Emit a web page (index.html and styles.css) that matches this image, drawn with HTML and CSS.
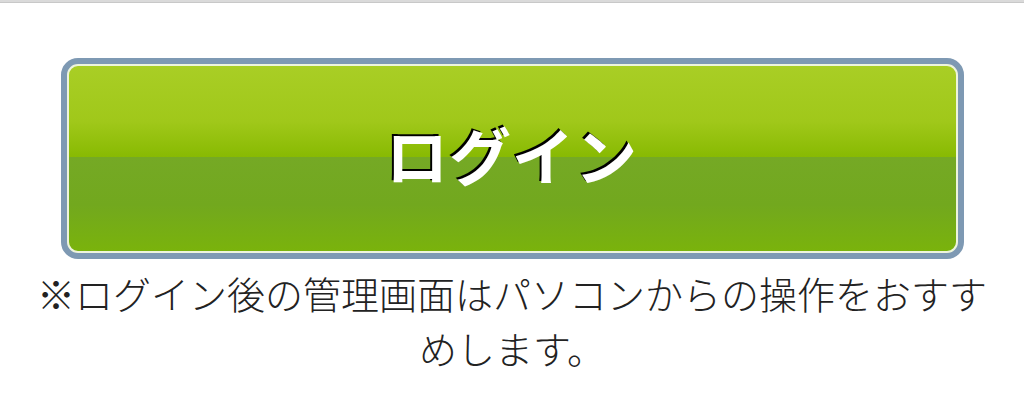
FILE: index.html
```html
<!DOCTYPE html>
<html lang="ja">
<head>
<meta charset="utf-8">
<link rel="stylesheet" href="styles.css">
</head>
<body>
<div class="topbar"></div>
<main class="page">
  <a class="login-btn" href="#"><span class="login-inner"><span class="login-label">ログイン</span></span></a>
  <p class="note">※ログイン後の管理画面はパソコンからの操作をおすすめします。</p>
</main>
</body>
</html>
```
FILE: styles.css
```css
html, body {
  margin: 0;
  padding: 0;
  background: #ffffff;
}
body {
  font-family: "Noto Sans CJK JP", "Noto Sans", sans-serif;
  color: #222222;
}
.topbar {
  height: 3px;
  background: #dadada;
  border-bottom: 1px solid #c8c8c8;
  box-sizing: border-box;
}
.page {
  display: flex;
  flex-direction: column;
  align-items: center;
  padding: 55px 20px 0;
}
.login-btn {
  display: block;
  width: 903px;
  height: 201px;
  box-sizing: border-box;
  border: 6px solid #7e99b3;
  border-radius: 17px;
  text-decoration: none;
  background: #7e99b3;
}
.login-inner {
  display: flex;
  align-items: center;
  justify-content: center;
  height: 100%;
  box-sizing: border-box;
  border: 2px solid #eef4dc;
  border-radius: 11px;
  background: linear-gradient(to bottom,
    #a9ce25 0%,
    #a0c81a 30%,
    #88ba02 49%,
    #75a925 49.3%,
    #72a81e 75%,
    #7ab30c 100%);
}
.login-label {
  font-size: 62px;
  font-weight: 700;
  color: #ffffff;
  text-shadow: -2px -2px 0 #000000;
  letter-spacing: 1px;
  line-height: 1;
  margin-top: -10px;
}
.note {
  margin: 6px 0 0;
  width: 984px;
  font-size: 38px;
  line-height: 55px;
  text-align: center;
  font-weight: 300;
  color: #222222;
}
```
